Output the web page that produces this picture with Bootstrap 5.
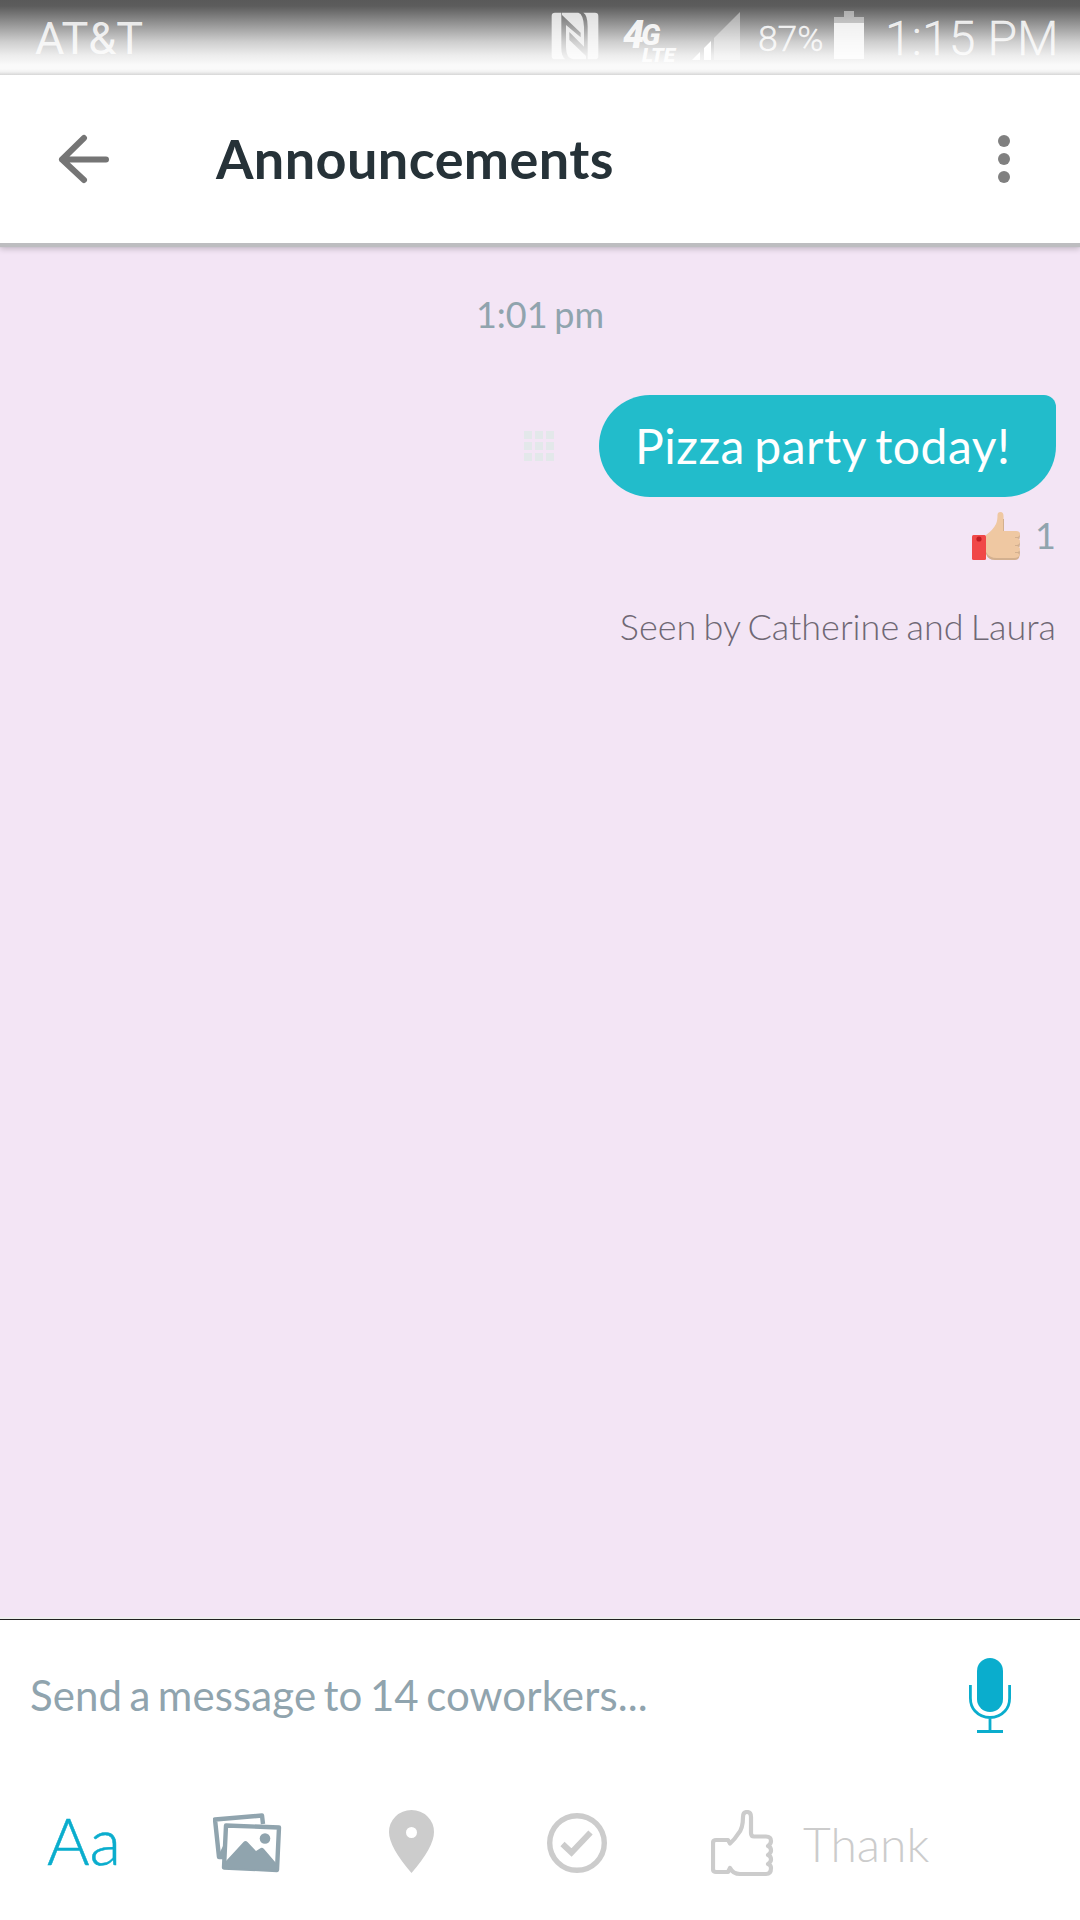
<!DOCTYPE html>
<html lang="en">
<head>
<meta charset="utf-8">
<meta name="viewport" content="width=device-width, initial-scale=1">
<title>Announcements</title>
<link href="https://cdn.jsdelivr.net/npm/bootstrap@5.3.0/dist/css/bootstrap.min.css" rel="stylesheet">
<style>
html, body { height: 100%; }
body { font-family: Lato, "Liberation Sans", sans-serif; line-height: 1.2; background: #fff; }
svg { display: block; flex: none; }
.app { width: 1080px; height: 1920px; overflow: hidden; }
.status { height: 75px; font-family: Roboto, sans-serif; font-weight: 300; color: rgba(255,255,255,.84); white-space: nowrap;
  background: linear-gradient(#595959 0, #5c5c5c 6px, #757575 14px, #a2a2a2 28px, #cfcfcf 42px, #ececec 55px, #fafafa 65px, #fafafa 69px, #f0f0f0 72px, #d6d6d6 75px); }
.status-row { height: 78px; }
.carrier { font-size: 45px; margin-left: 35px; width: 107px; font-weight: 400; }
.radio { margin-left: 409px; }
.percent { font-size: 35.500px; margin-left: 17px; width: 65px; -webkit-text-stroke: .4px rgba(255,255,255,.84); letter-spacing: -.1px; }
.cell { margin-left: 11px; }
.clock { font-size: 48px; margin-left: 21px; -webkit-text-stroke: .3px rgba(255,255,255,.84); letter-spacing: .15px; }
.topbar { height: 168px; z-index: 1; box-shadow: 0 4px 1px #bdbdc0, 0 6px 6px rgba(0,0,0,.2); }
.back { margin-left: 58px; }
.heading { font-size: 54px; font-weight: 700; color: #263238; margin-left: 107px; padding-top: 1px; letter-spacing: .4px; }
.more { margin-right: 70px; }
.thread { background: #f3e5f5; height: 1374px; padding: 50px 24px 0; }
.stamp { font-size: 36px; color: #90a4ae; word-spacing: -2.500px; }
.message { margin-top: 59px; }
.bubble { width: 457px; height: 102px; padding-left: 36px; font-size: 48px; color: #fff; background: #22bccb; border-radius: 51px 12px 51px 51px; margin-left: 45px; white-space: nowrap; letter-spacing: .5px; word-spacing: -3.400px; }
.reaction { height: 66px; margin-top: 6px; font-size: 36px; color: #90a4ae; }
.count { margin-left: 15px; margin-top: -2px; }
.seen { font-size: 36px; font-weight: 300; color: #6f6874; margin-top: 36px; word-spacing: -2.500px; }
.composer { height: 303px; border-top: 2px solid #eee; }
.composer-inner { border-top: 1px solid #212121; height: 301px; }
.input-line { height: 149px; font-size: 42px; color: #90a4ae; padding: 2px 69px 0 30px; word-spacing: -3.500px; letter-spacing: .1px; }
.tools { height: 148px; color: #ccc; }
.fmt { font-size: 65px; font-weight: 300; color: #0aadcd; margin-left: 47px; width: 70px; margin-top: -6px; -webkit-text-stroke: .5px #0aadcd; }
.photos { margin-left: 96px; }
.pin { margin-left: 107px; margin-bottom: 3px; }
.check { margin-left: 113px; }
.thumb { margin-left: 104px; }
.thank { font-size: 48px; font-weight: 300; margin-left: 29px; margin-top: 1px; }
</style>
<script src="https://cdn.jsdelivr.net/npm/bootstrap@5.3.0/dist/js/bootstrap.bundle.min.js"></script>
</head>
<body>
<div class="app d-flex flex-column">
  <div class="status">
    <div class="status-row d-flex align-items-center">
      <span class="carrier">AT&amp;T</span>
      <svg class="radio" width="190" height="78" viewBox="551 0 190 78" fill="#fff">
        <g fill-opacity=".78" transform="translate(540 0) scale(.33333)">
          <path d="M45 38H64V145Q64 170 76 178H45Q35 178 35 168V48Q35 38 45 38Z"/>
          <path d="M66 38H115Q130 42 132 80V140L88 96V120L138 168V178H100Q78 176 78 140V75L122 112V98L66 45Z"/>
          <path d="M130 38H165Q175 38 175 48V168Q175 178 165 178H143V80Q143 45 130 38Z"/>
        </g>
        <g font-family="Roboto, sans-serif" font-weight="900" font-style="italic" fill-opacity=".9">
          <text x="623" y="48" font-size="38">4<tspan font-size="29" dx="-3" dy="-3">G</tspan></text>
          <text x="642" y="62" font-size="20" textLength="33" lengthAdjust="spacingAndGlyphs">LTE</text>
        </g>
        <path d="M692 60L700 52V60ZM704 60V48L711 41V60Z"/>
        <path fill-opacity=".4" d="M714 60V38L740 12V60Z"/>
      </svg>
      <span class="percent">87%</span>
      <svg class="cell" width="30" height="78" viewBox="834 0 30 78" fill="#fff">
        <path fill-opacity=".45" d="M834 23V17H844V11H854V17H864V23Z"/>
        <path fill-opacity=".86" d="M834 23H864V59H834Z"/>
      </svg>
      <span class="clock">1:15 PM</span>
    </div>
  </div>
  <header class="topbar bg-white d-flex align-items-center position-relative">
    <svg class="back" width="51" height="50" viewBox="58 134 51 50" fill="none" stroke="#757575" stroke-width="6" stroke-linecap="round" stroke-linejoin="round"><path d="M106 159.500H62M84 138L62 159.500L84 180"/></svg>
    <h1 class="heading mb-0">Announcements</h1>
    <svg class="more ms-auto" width="12" height="50" viewBox="0 0 12 50" fill="#808080"><circle cx="6" cy="7" r="6"/><circle cx="6" cy="25" r="6"/><circle cx="6" cy="43" r="6"/></svg>
  </header>
  <main class="thread">
    <div class="stamp text-center">1:01 pm</div>
    <div class="message d-flex justify-content-end align-items-center">
      <svg width="30" height="30" viewBox="0 0 30 30" fill="#e3e8ea"><path d="M0 0h8v8H0zM11 0h8v8h-8zM22 0h8v8h-8zM0 11h8v8H0zM11 11h8v8h-8zM22 11h8v8h-8zM0 22h8v8H0zM11 22h8v8h-8zM22 22h8v8h-8z"/></svg>
      <div class="bubble d-flex align-items-center">Pizza party today!</div>
    </div>
    <div class="reaction d-flex justify-content-end align-items-center">
      <svg width="48" height="48" viewBox="972 512 48 48">
        <path fill="#d3b08f" d="M986 535L1000 540L1016 532Q1020 532 1020 536Q1020 539 1018 540Q1020 542 1020 544Q1020 547 1018 548.500Q1020 550 1020 552Q1020 560 1015 560H995Q988 560 986 554Z"/>
        <path fill="#efc8a2" d="M986 535Q993 530 996 524Q997.500 521 997.500 515Q997.500 512 1000.500 512Q1003.500 512 1003.500 516V531H1016Q1020 531 1020 534Q1020 537 1015 537.500Q1020 538 1020 541Q1020 545 1015 545.500Q1020 546 1020 549Q1020 552 1015 552.500Q1020 553 1019.500 555.500Q1018 558 1014 558H997Q989 558 986 552Z"/>
        <path fill="none" stroke="#d3b08f" d="M1003.500 519V531M1015 537.500H1019M1015 545.500H1019M1015 552.500H1019"/>
        <rect x="972" y="535" width="14" height="25" rx="1.500" fill="#f04848"/><circle cx="979" cy="539" r="2.600" fill="#c11c22"/>
      </svg>
      <span class="count">1</span>
    </div>
    <div class="seen text-end">Seen by Catherine and Laura</div>
  </main>
  <footer class="composer">
    <div class="composer-inner">
      <div class="input-line d-flex align-items-center justify-content-between">
        <span>Send a message to 14 coworkers...</span>
        <svg width="42" height="76" viewBox="969 1658 42 76" fill="none" stroke="#0aadcd" stroke-width="2.800"><rect x="977" y="1658" width="26" height="54" rx="13" fill="#0aadcd" stroke="none"/><path d="M970.400 1685V1698Q970.400 1706 975 1711Q981 1717.500 990 1717.500Q999 1717.500 1005 1711Q1009.600 1706 1009.600 1698V1685M990 1717.500V1731.500M977 1731.500H1003"/></svg>
      </div>
      <div class="tools d-flex align-items-center">
        <span class="fmt">Aa</span>
        <svg class="photos" width="69" height="60" viewBox="213 1813 69 60" fill="none" stroke="#90a4ae" stroke-width="4.400" stroke-linejoin="round">
          <path d="M263 1824L262 1815.500L215 1819.500L219 1857H224"/><path d="M226 1825.500L279 1827.500L277 1870L224 1867.500Z"/>
          <path fill="#90a4ae" stroke="none" d="M220 1852L223 1846V1858H219ZM226 1861L243.500 1842Q245.500 1840 247.500 1842L256 1851L260 1848.500Q262 1847 264 1849L276 1863L277 1870L224 1868Z"/><circle cx="265" cy="1838.500" r="5.300" fill="#90a4ae" stroke="none"/>
        </svg>
        <svg class="pin" width="45" height="63" viewBox="389 1810 45 63"><path fill="#ccc" fill-rule="evenodd" d="M411.500 1810Q421 1810 427.500 1816.500Q434 1823 434 1832Q434 1847 411.500 1873Q389 1847 389 1832Q389 1823 395.500 1816.500Q402 1810 411.500 1810ZM411.500 1827A5.500 5.500 0 1 0 411.500 1838A5.500 5.500 0 1 0 411.500 1827Z"/></svg>
        <svg class="check" width="60" height="60" viewBox="0 0 60 60" fill="none" stroke="#ccc"><circle cx="30" cy="30" r="27.300" stroke-width="5.400"/><path stroke-width="6" d="M15.500 31L24.500 39.500L43.500 19.500"/></svg>
        <svg class="thumb" width="63" height="67" viewBox="711 1810 63 67" fill="none" stroke="#ccc" stroke-width="4.200" stroke-linejoin="round" stroke-linecap="round"><path d="M730 1843.500L728 1840H716Q713 1840 713 1843V1869Q713 1872 716 1872H728L730 1868Q733 1874 740 1874H766Q771 1874 771 1868Q771 1865 768 1864Q771 1862 771 1859.500Q771 1856 768 1855Q771 1853 771 1850.500Q771 1847 768 1846Q771 1844 771 1841Q771 1836.500 766 1836.500H754Q751 1836.500 751 1833V1817Q751 1812 747 1812Q743 1812 743 1817Q743 1829 738 1834Q735 1839 730 1843.500Z"/></svg>
        <span class="thank">Thank</span>
      </div>
    </div>
  </footer>
</div>
</body>
</html>
